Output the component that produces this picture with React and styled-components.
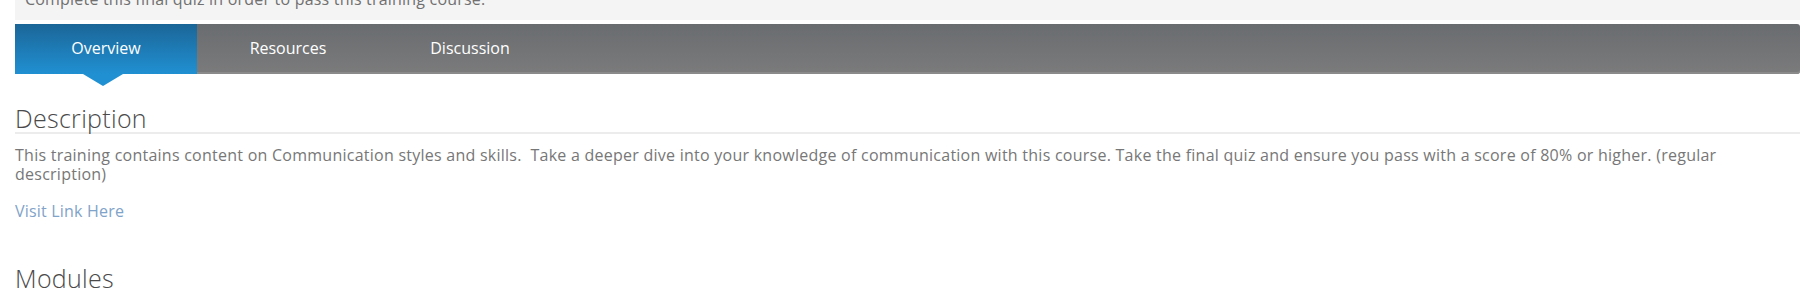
import React from 'react'
import styled, { createGlobalStyle } from 'styled-components'

const GlobalStyle = createGlobalStyle`
  html, body {
    margin: 0;
    padding: 0;
    background: #ffffff;
    overflow: hidden;
  }
  body {
    font-family: "Open Sans", "Liberation Sans", sans-serif;
  }
`

const Page = styled.div`
  padding: 0 9px 0 15px;
  height: 293px;
  overflow: hidden;
`

const Notice = styled.div`
  background: #f4f4f4;
  color: #707070;
  font-size: 16px;
  line-height: 20px;
  letter-spacing: 0.2px;
  margin-top: -11px;
  padding: 0 10px 11px;
`

const TabBar = styled.nav`
  display: flex;
  height: 50px;
  margin-top: 4px;
  border-radius: 0 3px 3px 0;
  background: linear-gradient(to bottom, #696c6f 0%, #7b7b7c 100%);
  box-shadow: inset 0 -2px 0 #8a8a8a;
`

const Tab = styled.div`
  position: relative;
  display: flex;
  align-items: center;
  justify-content: center;
  width: 182px;
  height: 50px;
  color: #ffffff;
  font-size: 16px;
  padding-bottom: 2px;
  box-sizing: border-box;
  background: ${({ $active }) =>
    $active ? 'linear-gradient(to bottom, #1b6698 0%, #2090d2 100%)' : 'transparent'};

  ${({ $active }) => $active && `
    &::after {
      content: '';
      position: absolute;
      left: 50%;
      top: 100%;
      margin-left: -23px;
      border-left: 20px solid transparent;
      border-right: 20px solid transparent;
      border-top: 12px solid #2090d2;
    }
  `}
`

const Heading = styled.h2`
  margin: 0;
  font-size: 25px;
  font-weight: 300;
  line-height: 26px;
  letter-spacing: 0.3px;
  color: #4a4a4a;
  ${({ $ruled }) => $ruled && `
    padding-bottom: 1px;
    border-bottom: 2px solid #ececec;
  `}
`

const Section = styled.section`
  padding-top: ${({ $top }) => $top}px;
`

const Text = styled.p`
  margin: 12px 0 0;
  font-size: 16px;
  line-height: 19px;
  color: #777777;
  letter-spacing: 0.25px;
  padding-right: 60px;
`

const VisitLink = styled.a`
  display: block;
  margin-top: 18px;
  font-size: 16px;
  line-height: 19px;
  letter-spacing: 0.2px;
  color: #7fa3c9;
  text-decoration: none;
`

export default function App() {
  return (
    <>
      <GlobalStyle />
      <Page>
        <Notice>Complete this final quiz in order to pass this training course.</Notice>
        <TabBar>
          <Tab $active>Overview</Tab>
          <Tab>Resources</Tab>
          <Tab>Discussion</Tab>
        </TabBar>
        <Section $top={31}>
          <Heading $ruled>Description</Heading>
          <Text>
            This training contains content on Communication styles and skills.&nbsp; Take a deeper dive into your knowledge of communication with this course. Take the final quiz and ensure you pass with a score of 80% or higher. (regular description)
          </Text>
          <VisitLink href="#">Visit Link Here</VisitLink>
        </Section>
        <Section $top={44}>
          <Heading>Modules</Heading>
        </Section>
      </Page>
    </>
  )
}
